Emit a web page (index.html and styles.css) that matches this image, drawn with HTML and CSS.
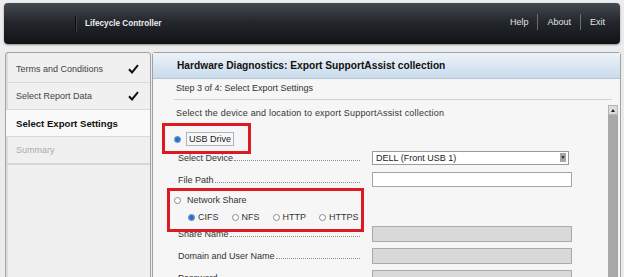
FILE: index.html
```html
<!DOCTYPE html>
<html lang="en">
<head>
    <meta charset="UTF-8">
    <title>Lifecycle Controller</title>
    <link rel="stylesheet" href="styles.css">
</head>
<body>
    <!-- top bar -->
    <div class="topbar">
        <div class="brand">Lifecycle Controller</div>
        <div class="links">
            <span class="link">Help</span>
            <span class="link">About</span>
            <span class="link">Exit</span>
        </div>
    </div>

    <div class="layout">
        <!-- wizard steps -->
        <div class="steps">
            <div class="step done">
                <span>Terms and Conditions</span>
                <svg class="check" width="11" height="10" viewBox="0 0 11 10"><path d="M1 5.2 L4 8.4 L10 1.2" fill="none" stroke="#111" stroke-width="2"/></svg>
            </div>
            <div class="step done">
                <span>Select Report Data</span>
                <svg class="check" width="11" height="10" viewBox="0 0 11 10"><path d="M1 5.2 L4 8.4 L10 1.2" fill="none" stroke="#111" stroke-width="2"/></svg>
            </div>
            <div class="step current"><span>Select Export Settings</span></div>
            <div class="step todo"><span>Summary</span></div>
        </div>

        <!-- main panel -->
        <div class="panel">
            <div class="panel-head">Hardware Diagnostics: Export SupportAssist collection</div>
            <div class="panel-body">
                <div class="step-title">Step 3 of 4: Select Export Settings</div>
                <div class="body-row">
                    <div class="form">
                        <p class="intro">Select the device and location to export SupportAssist collection</p>

                        <div class="option usb">
                            <span class="radio on"></span>
                            <span class="usb-label">USB Drive</span>
                            <div class="highlight hl-usb"></div>
                        </div>

                        <div class="field">
                            <div class="label"><span>Select Device</span><span class="dots"></span></div>
                            <div class="select">
                                <span>DELL (Front USB 1)</span>
                                <span class="arrow">&#9660;</span>
                            </div>
                        </div>

                        <div class="field">
                            <div class="label"><span>File Path</span><span class="dots"></span></div>
                            <div class="input"></div>
                        </div>

                        <div class="network">
                            <div class="option">
                                <span class="radio"></span>
                                <span class="opt-text">Network Share</span>
                            </div>
                            <div class="protocols">
                                <span class="proto"><span class="radio on"></span>CIFS</span>
                                <span class="proto"><span class="radio"></span>NFS</span>
                                <span class="proto"><span class="radio"></span>HTTP</span>
                                <span class="proto"><span class="radio"></span>HTTPS</span>
                            </div>
                            <div class="highlight hl-net"></div>
                        </div>

                        <div class="field share first">
                            <div class="label"><span>Share Name</span><span class="dots"></span></div>
                            <div class="input disabled"></div>
                        </div>

                        <div class="field share">
                            <div class="label"><span>Domain and User Name</span><span class="dots"></span></div>
                            <div class="input disabled"></div>
                        </div>

                        <div class="field share">
                            <div class="label"><span>Password</span><span class="dots"></span></div>
                            <div class="input disabled"></div>
                        </div>
                    </div>

                    <div class="scrollbar">
                        <div class="scroll-up"></div>
                        <div class="scroll-track"></div>
                    </div>
                </div>
            </div>
        </div>
    </div>
</body>
</html>
```

FILE: styles.css
```css
body {
    margin: 0;
    height: 277px;
    overflow: hidden;
    background-color: #ececec;
    font-family: "Liberation Sans", Arial, sans-serif;
    font-size: 9px;
    color: #222;
}

/* top bar */
.topbar {
    display: flex;
    align-items: center;
    justify-content: space-between;
    height: 41px;
    margin: 3px 4px 0 4px;
    border-radius: 4px;
    background: linear-gradient(#444a51, #24282d 45%, #101316);
    box-shadow: 0 1px 2px rgba(0, 0, 0, 0.4);
}
.brand {
    margin-left: 71px;
    padding-left: 9px;
    height: 16px;
    line-height: 16px;
    border-left: 1px solid #0b0d0f;
    box-shadow: inset 1px 0 0 #3a3f45;
    color: #eee;
    font-weight: bold;
    font-size: 8.2px;
}
.links {
    display: flex;
    margin-right: 15px;
    margin-top: -4px;
}
.link {
    color: #e2e2e2;
    font-size: 9px;
    padding: 0 9px;
    line-height: 16px;
    border-left: 1px solid #6a6f75;
}
.link:first-child {
    border-left: none;
}
.link:last-child {
    padding-right: 0;
}

/* layout */
.layout {
    display: flex;
    margin-top: 8px;
    margin-left: 5px;
    gap: 1px;
}

/* wizard steps */
.steps {
    width: 144px;
    height: 240px;
    padding-top: 3px;
    background-color: #f0f0f0;
    border: 1px solid #a3a3a3;
    border-radius: 3px 3px 0 0;
    box-shadow: inset 2px 0 0 #dcdcdc;
}
.step {
    display: flex;
    align-items: center;
    justify-content: space-between;
    height: 26px;
    padding: 0 11px 0 10px;
    border-bottom: 1px solid #d9d9d9;
    color: #444;
}
.step.current {
    background-color: #f9f9f9;
    color: #111;
    font-weight: bold;
    font-size: 9.6px;
}
.step.todo {
    color: #aaa;
    border-bottom: 2px solid #d6d6d6;
}

/* main panel */
.panel {
    width: 467px;
    height: 240px;
    border: 1px solid #9ea3a8;
    border-radius: 3px 3px 0 0;
    background-color: #f6f6f6;
}
.panel-head {
    height: 25px;
    line-height: 25px;
    padding-left: 24px;
    background: linear-gradient(#edf3f9, #c9dbeb);
    border-bottom: 1px solid #b6c6d4;
    font-weight: bold;
    font-size: 10.2px;
    color: #111;
}
.panel-body {
    padding-top: 2px;
}
.step-title {
    margin: 0 8px 0 21px;
    padding: 0 0 4px 2px;
    line-height: 14px;
    border-bottom: 1px solid #d2d2d2;
    color: #333;
}
.body-row {
    display: flex;
}
.form {
    flex: 1;
    padding-left: 21px;
}
.intro {
    margin: 6px 0 11px 2px;
    line-height: 14px;
    letter-spacing: 0.2px;
    color: #333;
}

/* radios */
.option {
    display: flex;
    align-items: center;
    height: 16px;
    position: relative;
}
.radio {
    display: inline-block;
    box-sizing: border-box;
    width: 7px;
    height: 7px;
    border: 1px solid #8a8a8a;
    border-radius: 50%;
    background-color: #fff;
}
.radio.on {
    border-color: #3f7fc4;
    background: radial-gradient(circle, #2c6fbf 55%, #6fa2da 70%);
}
.usb-label {
    margin-left: 5px;
    padding: 0 2px;
    line-height: 12px;
    border: 1px solid #a8b4c0;
    background-color: #f8f8f8;
    color: #222;
}
.opt-text {
    margin-left: 6px;
    color: #333;
}

/* annotation boxes */
.highlight {
    position: absolute;
    box-sizing: border-box;
    border: 3px solid #dc1a24;
}
.hl-usb {
    left: -12px;
    top: -8px;
    width: 89px;
    height: 31px;
}
.hl-net {
    left: -7px;
    top: -5px;
    width: 197px;
    height: 44px;
}

/* fields */
.field {
    display: grid;
    grid-template-columns: 186px 200px;
    column-gap: 12px;
    align-items: center;
    height: 15px;
    margin-top: 7px;
}
.usb + .field {
    margin-top: 3px;
}
.field.share {
    height: 16px;
    margin-top: 6px;
}
.field.first {
    margin-top: 2px;
}
.label {
    display: flex;
    align-items: baseline;
    margin-left: 4px;
    color: #333;
}
.dots {
    flex: 1;
    border-bottom: 1px dotted #8c8c8c;
    margin-left: 1px;
}
.select {
    display: flex;
    align-items: center;
    justify-content: space-between;
    box-sizing: border-box;
    width: 197px;
    height: 14px;
    padding: 0 2px 0 3px;
    background-color: #fff;
    border: 1px solid #9a9a9a;
    color: #222;
}
.arrow {
    width: 6px;
    height: 9px;
    line-height: 9px;
    font-size: 5px;
    text-align: center;
    background-color: #a5a5a5;
    color: #111;
}
.input {
    box-sizing: border-box;
    height: 15px;
    background-color: #fff;
    border: 1px solid #a3a3a3;
}
.input.disabled {
    height: 16px;
    background-color: #d9d9d9;
    border-color: #a9a9a9;
}

/* network share block */
.network {
    position: relative;
    margin-top: 6px;
}
.network .option {
    height: 14px;
}
.protocols {
    display: flex;
    align-items: center;
    height: 14px;
    margin-top: 3px;
    padding-left: 14px;
}
.proto {
    display: flex;
    align-items: center;
    gap: 3px;
    margin-right: 13px;
    color: #333;
}

/* scrollbar */
.scrollbar {
    width: 10px;
    margin: 5px 2px 0 0;
    display: flex;
    flex-direction: column;
}
.scroll-up {
    height: 10px;
    background-color: #dcdcdc;
    border: 1px solid #b5b5b5;
    box-sizing: border-box;
    position: relative;
}
.scroll-up::after {
    content: "";
    position: absolute;
    left: 2px;
    top: 3px;
    border-left: 2px solid transparent;
    border-right: 2px solid transparent;
    border-bottom: 3px solid #222;
}
.scroll-track {
    flex: 1;
    background-color: #a9a9a9;
}
```
